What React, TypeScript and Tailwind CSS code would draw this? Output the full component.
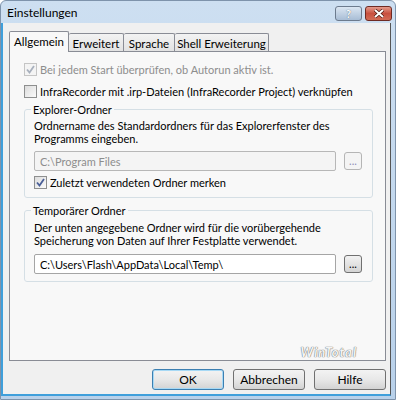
import React from "react";

const font = { fontFamily: 'Lato, "Noto Sans", Arial, sans-serif' };

function Check({ checked, disabled }: { checked?: boolean; disabled?: boolean }) {
  return (
    <span
      className={
        "flex h-[13px] w-[13px] shrink-0 items-center justify-center border " +
        (disabled
          ? "border-[#c5c5c5] bg-[#f4f4f4]"
          : "border-[#8e8f8f] bg-gradient-to-br from-[#dcdcdc] to-[#fbfbfb]")
      }
    >
      {checked && (
        <svg width="9" height="9" viewBox="0 0 9 9">
          <path
            d="M1 4.5 L3.5 7.5 L8 1"
            fill="none"
            stroke={disabled ? "#a8b0bd" : "#4a5f97"}
            strokeWidth="1.8"
          />
        </svg>
      )}
    </span>
  );
}

function Browse({ disabled }: { disabled?: boolean }) {
  return (
    <div
      className={
        "flex h-[18px] w-[18px] items-end justify-center rounded-[3px] border pb-[3px] text-[11px] leading-none " +
        (disabled
          ? "border-[#b5b5b5] bg-[#f4f4f4] text-[#8f8fb8]"
          : "border-[#707070] bg-gradient-to-b from-[#f2f2f2] to-[#d4d4d4] text-black")
      }
    >
      ...
    </div>
  );
}

function Button({ label, focus }: { label: string; focus?: boolean }) {
  return (
    <div
      className={
        "flex h-[21px] w-[72px] items-center justify-center rounded-[3px] border bg-gradient-to-b from-[#f3f3f3] via-[#e8e8e8] to-[#d3d3d3] text-black " +
        (focus ? "border-[#3c7fb1] shadow-[inset_0_0_0_1px_#a7d9f5]" : "border-[#707070]")
      }
    >
      {label}
    </div>
  );
}

export default function App() {
  const tabs = [
    { label: "Allgemein", w: "w-[60px]" },
    { label: "Erweitert", w: "w-[55px]" },
    { label: "Sprache", w: "w-[51px]" },
    { label: "Shell Erweiterung", w: "w-[94px]" },
  ];
  return (
    <div
      style={font}
      className="flex h-[400px] w-[396px] flex-col overflow-hidden rounded-t-[6px] border border-[#7e93ab] bg-gradient-to-b from-[#cddff1] to-[#b9d1ea] text-[11px] leading-[13px] text-black"
    >
      {/* title bar */}
      <div className="flex h-[22px] shrink-0 items-center justify-between pl-[6px] pr-[3px]">
        <span className="text-[12px] text-black">Einstellungen</span>
        <div className="flex gap-[3px] pt-[2px]">
          <div className="flex h-[15px] w-[27px] items-center justify-center rounded-[3px] border border-[#6c7b8e] bg-gradient-to-b from-[#dbe6f2] to-[#a8bdd5] text-[11px] font-bold text-white [text-shadow:0_0_1px_#3b4a5c]">
            ?
          </div>
          <div className="flex h-[15px] w-[27px] items-center justify-center rounded-[3px] border border-[#6e2a23] bg-gradient-to-b from-[#e39a8c] via-[#c8503f] to-[#d26b55]">
            <svg width="12" height="9" viewBox="0 0 12 9">
              <path d="M2 1 L10 8 M10 1 L2 8" stroke="#4a1810" strokeWidth="3.4" />
              <path d="M2 1 L10 8 M10 1 L2 8" stroke="#fff" strokeWidth="2" />
            </svg>
          </div>
        </div>
      </div>

      {/* client area */}
      <div className="mb-[3px] ml-[2px] mr-[4px] flex flex-1 flex-col border-b-[2px] border-r border-b-[#3f9fdb] border-r-[#555] bg-[#f0f0f0] pl-[6px] pr-[4px] pt-[8px] shadow-[-2px_0_0_#3f9fdb]">
        {/* tabs */}
        <div className="relative z-10 flex h-[20px] items-end whitespace-nowrap text-[11.5px]">
          {tabs.map((t, i) =>
            i === 0 ? (
              <div
                key={t.label}
                className={t.w + " flex h-[21px] -mb-[1px] items-start justify-center rounded-t-[2px] border border-b-0 border-[#898c95] bg-[#f8f8f8] pt-[3px]"}
              >
                {t.label}
              </div>
            ) : (
              <div
                key={t.label}
                className={t.w + " flex h-[18px] items-center justify-center rounded-t-[2px] border border-b-0 border-l-0 border-[#898c95] bg-gradient-to-b from-[#f3f3f3] to-[#e2e2e2] pt-[1px]"}
              >
                {t.label}
              </div>
            )
          )}
        </div>

        {/* panel */}
        <div className="relative flex h-[310px] flex-col border border-[#898c95] bg-[#f8f8f8] pl-[14px] pr-[12px] pt-[6px]">
          <div className="flex h-[22px] items-center gap-[3px] whitespace-nowrap text-[#8d8d8d]">
            <Check checked disabled />
            <span>Bei jedem Start überprüfen, ob Autorun aktiv ist.</span>
          </div>
          <div className="flex h-[22px] items-center gap-[3px] whitespace-nowrap">
            <Check />
            <span>InfraRecorder mit .irp-Dateien (InfraRecorder Project) verknüpfen</span>
          </div>

          <fieldset className="rounded-[3px] border border-[#d5dfe5] pb-[4px] pl-[9px] pr-[10px]">
            <legend className="-ml-[3px] px-[2px] leading-[15px]">Explorer-Ordner</legend>
            <p className="pt-[2px]">
              Ordnername des Standardordners für das Explorerfenster des
              <br />
              Programms eingeben.
            </p>
            <div className="mt-[6px] flex items-center justify-between">
              <div className="flex h-[20px] w-[302px] items-center rounded-[2px] border border-[#b7b7b7] bg-[#f4f4f4] px-[5px] text-[#8d8d8d]">
                C:\Program Files
              </div>
              <Browse disabled />
            </div>
            <div className="flex h-[22px] items-center gap-[3px]">
              <Check checked />
              <span>Zuletzt verwendeten Ordner merken</span>
            </div>
          </fieldset>

          <fieldset className="mt-[5px] rounded-[3px] border border-[#d5dfe5] pb-[7px] pl-[9px] pr-[10px]">
            <legend className="-ml-[3px] px-[2px] leading-[15px]">Temporärer Ordner</legend>
            <p className="pt-[3px]">
              Der unten angegebene Ordner wird für die vorübergehende
              <br />
              Speicherung von Daten auf Ihrer Festplatte verwendet.
            </p>
            <div className="mt-[7px] flex items-center justify-between">
              <div className="flex h-[20px] w-[302px] items-center rounded-[2px] border border-[#a5a5a5] bg-white px-[5px]">
                C:\Users\Flash\AppData\Local\Temp\
              </div>
              <Browse />
            </div>
          </fieldset>

          <div className="mt-auto flex justify-end pb-[1px] pr-[16px]">
            <span className="text-[13px] font-bold italic tracking-[1px] text-[#f4f4f4] [text-shadow:0_0_1px_#6a6a6a,0_0_1px_#6a6a6a]">
              WinTotal
            </span>
          </div>
        </div>

        {/* buttons */}
        <div className="mt-[8px] flex justify-end gap-[9px] text-[12px]">
          <Button label="OK" focus />
          <Button label="Abbrechen" />
          <Button label="Hilfe" />
        </div>
      </div>
    </div>
  );
}
